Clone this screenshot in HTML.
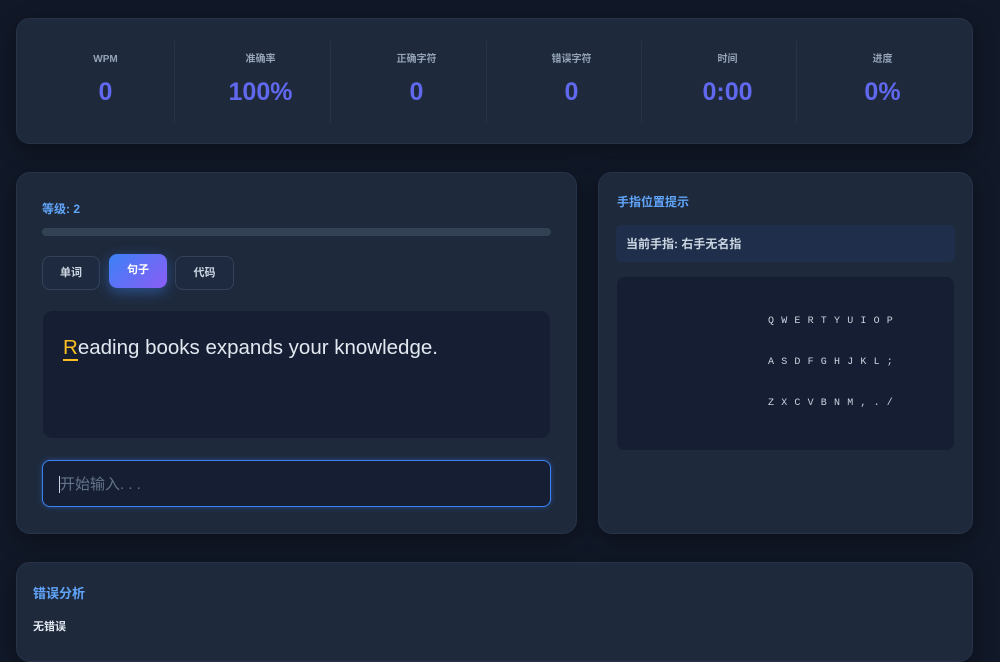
<!DOCTYPE html>
<html><head><meta charset="utf-8"><style>
*{box-sizing:border-box;margin:0;padding:0}
body{width:1000px;height:640px;overflow:hidden;background:#111827;font-family:"Liberation Sans","Noto Sans CJK SC",sans-serif;position:relative}
.card{position:absolute;background:#1e293b;border:1px solid #263349;border-radius:14px;box-shadow:0 6px 20px rgba(0,0,0,.35)}
.stat{position:absolute;top:22px;width:155px;text-align:center}
.stat .l{font-size:10px;font-weight:bold;color:#94a3b8;position:absolute;top:12px;left:0;right:0;line-height:14px}
.stat .v{font-size:25px;font-weight:bold;color:#6068ee;position:absolute;top:36px;left:0;right:0;line-height:30px}
.sep{position:absolute;top:22px;width:1px;height:82px;background:#263349}
.btn{position:absolute;top:256px;height:34px;border-radius:8px;background:#1e2a40;border:1px solid #33415a;color:#cbd5e1;font-size:11px;font-weight:bold;text-align:center;line-height:32px}
.kb{font-family:"Liberation Mono",monospace;font-size:10px;color:#cbd5e1;letter-spacing:7.2px;position:absolute;left:768px;line-height:12px}
</style></head><body>
<div class="card" style="left:16px;top:18px;width:957px;height:126px">
<div class="stat" style="left:11px"><div class="l">WPM</div><div class="v">0</div></div>
<div class="sep" style="left:157px"></div>
<div class="stat" style="left:166px"><div class="l">准确率</div><div class="v">100%</div></div>
<div class="sep" style="left:313px"></div>
<div class="stat" style="left:322px"><div class="l">正确字符</div><div class="v">0</div></div>
<div class="sep" style="left:469px"></div>
<div class="stat" style="left:477px"><div class="l">错误字符</div><div class="v">0</div></div>
<div class="sep" style="left:624px"></div>
<div class="stat" style="left:633px"><div class="l">时间</div><div class="v">0:00</div></div>
<div class="sep" style="left:779px"></div>
<div class="stat" style="left:788px"><div class="l">进度</div><div class="v">0%</div></div>
</div>

<div class="card" style="left:16px;top:172px;width:561px;height:362px"></div>
<div style="position:absolute;left:42px;top:200px;font-size:12px;font-weight:bold;color:#60a5fa">等级: 2</div>
<div style="position:absolute;left:42px;top:228px;width:509px;height:8px;border-radius:4px;background:#334155"></div>
<div class="btn" style="left:42px;width:58px">单词</div>
<div class="btn" style="left:109px;top:254px;width:58px;border:none;background:linear-gradient(135deg,#3b82f6,#8b5cf6);color:#fff;box-shadow:0 4px 14px rgba(59,130,246,.45)">句子</div>
<div class="btn" style="left:175px;width:59px">代码</div>
<div style="position:absolute;left:43px;top:311px;width:507px;height:127px;border-radius:10px;background:#151e32;padding:25px 20px;font-size:20.5px;line-height:24px;color:#e2e8f0"><span style="color:#fbbf24;border-bottom:2px solid #fbbf24">R</span>eading books expands your knowledge.</div>
<div style="position:absolute;left:42px;top:460px;width:509px;height:47px;border-radius:8px;background:#151e32;border:1.5px solid #3b82f6;box-shadow:0 0 6px rgba(59,130,246,.4);padding:12px 16px;font-size:15px;color:#64748b"><span style="border-left:1px solid #cbd5e1"></span>开始输入. . .</div>

<div class="card" style="left:598px;top:172px;width:375px;height:362px"></div>
<div style="position:absolute;left:617px;top:193px;font-size:12px;font-weight:bold;color:#60a5fa">手指位置提示</div>
<div style="position:absolute;left:616px;top:225px;width:339px;height:37px;border-radius:6px;background:#1f2f4b;padding:10px 10px;font-size:12px;font-weight:bold;color:#cbd5e1">当前手指: 右手无名指</div>
<div style="position:absolute;left:617px;top:277px;width:337px;height:173px;border-radius:8px;background:#151e32"></div>
<div class="kb" style="top:316px">QWERTYUIOP</div>
<div class="kb" style="top:357px">ASDFGHJKL;</div>
<div class="kb" style="top:398px">ZXCVBNM,./</div>

<div class="card" style="left:16px;top:562px;width:957px;height:100px"></div>
<div style="position:absolute;left:33px;top:583px;font-size:13px;font-weight:bold;color:#60a5fa">错误分析</div>
<div style="position:absolute;left:33px;top:618px;font-size:11px;font-weight:bold;color:#e2e8f0">无错误</div>
</body></html>
